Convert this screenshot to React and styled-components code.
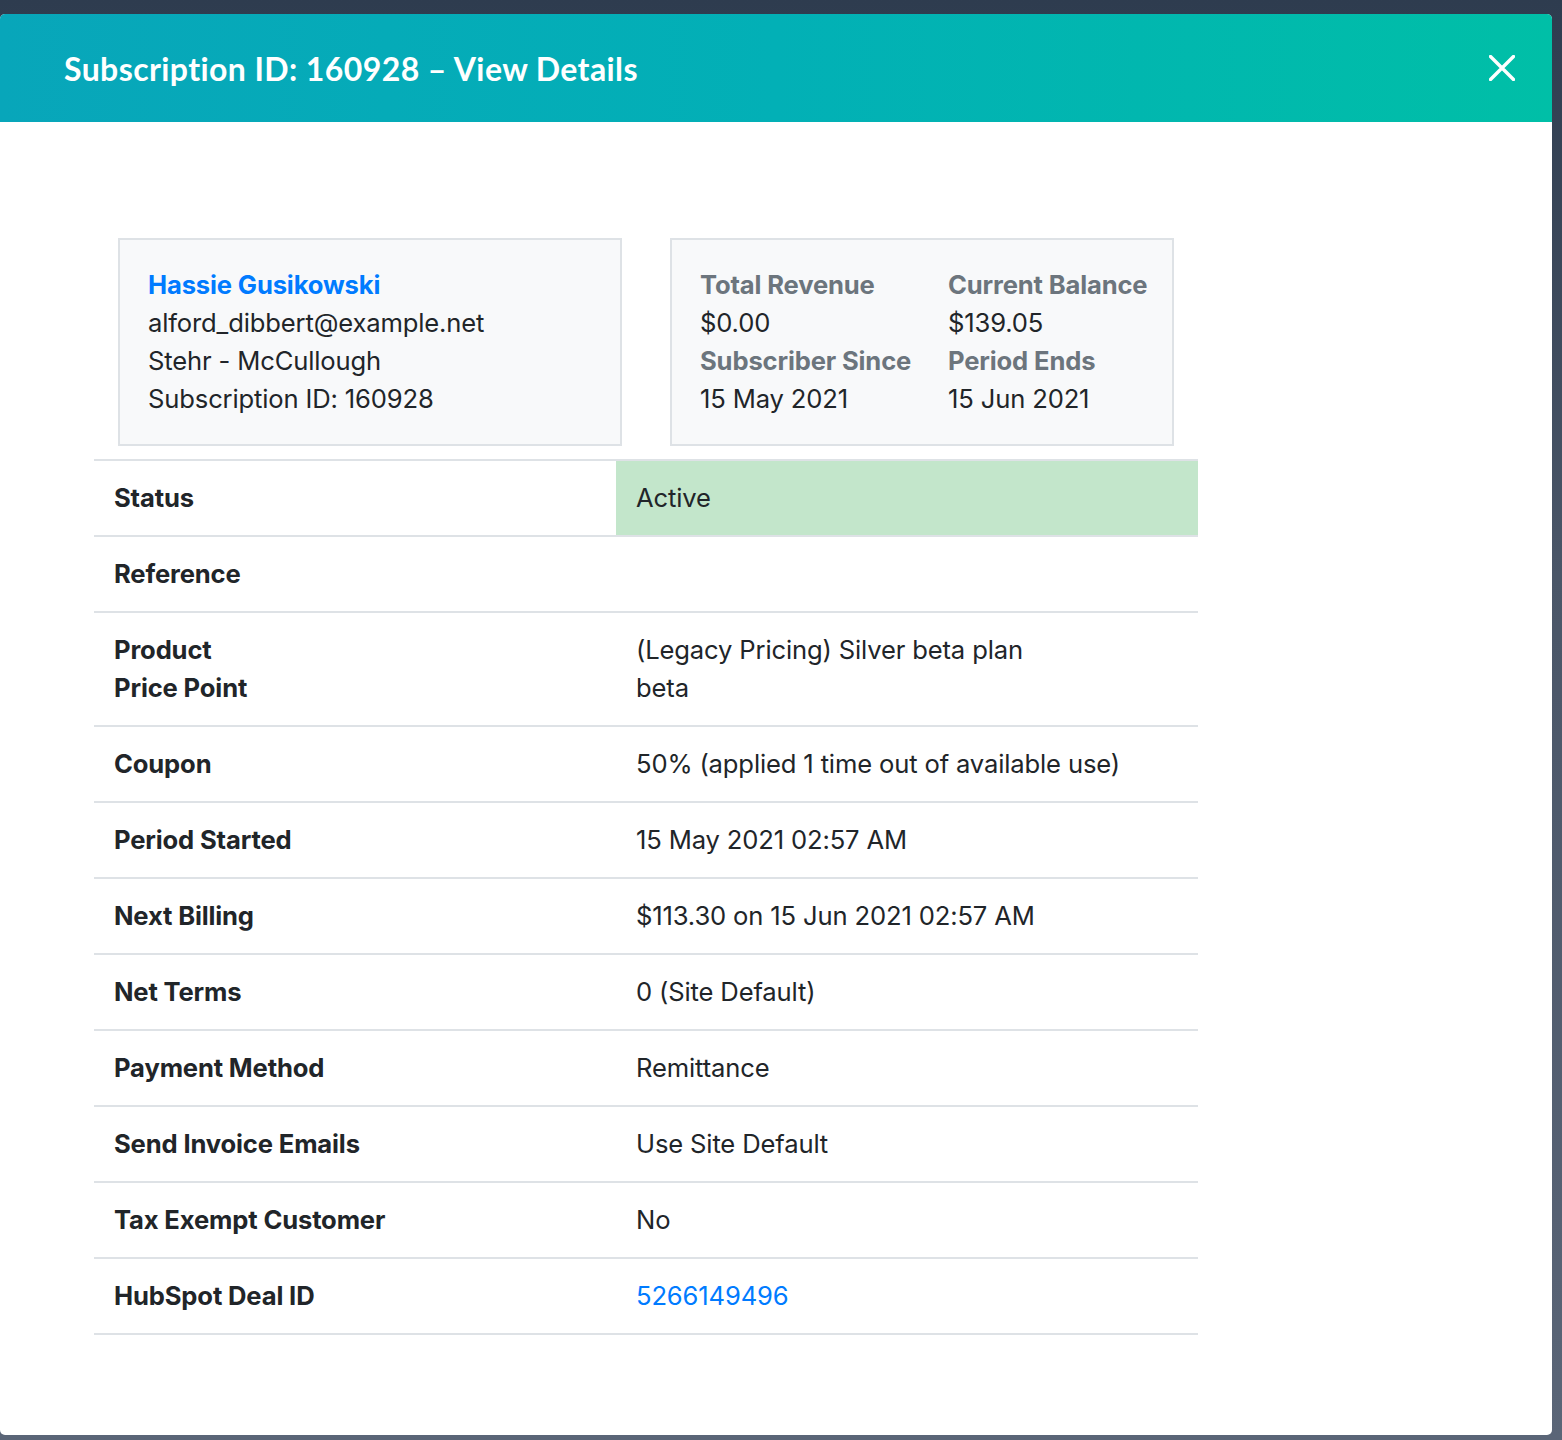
import styled, { createGlobalStyle } from "styled-components";

const GlobalStyle = createGlobalStyle`
  html, body {
    margin: 0;
    padding: 0;
  }
  body {
    background: linear-gradient(180deg, #2e3c4f 0%, #4a5668 40%, #5a6577 100%);
    min-height: 1440px;
    font-family: Inter, "Noto Sans", "Liberation Sans", sans-serif;
    color: #212529;
  }
`;

const rows = [
  { label: "Status", value: "Active", variant: "success" },
  { label: "Reference", value: "" },
  {
    label: ["Product", "Price Point"],
    value: ["(Legacy Pricing) Silver beta plan", "beta"],
  },
  { label: "Coupon", value: "50% (applied 1 time out of available use)" },
  { label: "Period Started", value: "15 May 2021 02:57 AM" },
  { label: "Next Billing", value: "$113.30 on 15 Jun 2021 02:57 AM" },
  { label: "Net Terms", value: "0 (Site Default)" },
  { label: "Payment Method", value: "Remittance" },
  { label: "Send Invoice Emails", value: "Use Site Default" },
  { label: "Tax Exempt Customer", value: "No" },
  { label: "HubSpot Deal ID", value: "5266149496", link: true },
];

const stats = [
  ["Total Revenue", "$0.00"],
  ["Current Balance", "$139.05"],
  ["Subscriber Since", "15 May 2021"],
  ["Period Ends", "15 Jun 2021"],
];

const CloseIcon = () => (
  <svg width="26" height="26" viewBox="0 0 26 26" fill="none">
    <path
      d="M1.5 1.5L24.5 24.5M24.5 1.5L1.5 24.5"
      stroke="#fff"
      strokeWidth="3.4"
      strokeLinecap="round"
    />
  </svg>
);

const lines = (v) => (Array.isArray(v) ? v.map((t) => <div key={t}>{t}</div>) : v);

const App = () => {
  return (
    <Page>
      <GlobalStyle />
      <Modal>
        <Header>
          <Title>Subscription ID: 160928 – View Details</Title>
          <CloseButton aria-label="Close">
            <CloseIcon />
          </CloseButton>
        </Header>
        <Body>
          <Cards>
            <Card>
              <CustomerName href="#">Hassie Gusikowski</CustomerName>
              <div>alford_dibbert@example.net</div>
              <div>Stehr - McCullough</div>
              <div>Subscription ID: 160928</div>
            </Card>
            <Card>
              {[0, 2].map((i) => (
                <StatPair key={i}>
                  <StatLabel>{stats[i][0]}</StatLabel>
                  <StatLabel>{stats[i + 1][0]}</StatLabel>
                  <div>{stats[i][1]}</div>
                  <div>{stats[i + 1][1]}</div>
                </StatPair>
              ))}
            </Card>
          </Cards>
          <Table>
            <tbody>
              {rows.map((r, i) => (
                <tr key={i}>
                  <LabelCell>{lines(r.label)}</LabelCell>
                  <ValueCell $variant={r.variant}>
                    {r.link ? <DealLink href="#">{r.value}</DealLink> : lines(r.value)}
                  </ValueCell>
                </tr>
              ))}
            </tbody>
          </Table>
        </Body>
      </Modal>
    </Page>
  );
};

const Page = styled.div`
  padding: 14px 10px 5px 0;
`;

const Modal = styled.div`
  background: #fff;
  border-radius: 5px;
  overflow: hidden;
  height: 1421px;
`;

const Header = styled.div`
  height: 108px;
  display: flex;
  align-items: center;
  justify-content: space-between;
  padding: 0 37px 0 64px;
  background: linear-gradient(90deg, #08a6ba 0%, #02b0b6 50%, #00bfa7 100%);
`;

const Title = styled.h1`
  margin: 0;
  color: #fff;
  font-family: Lato, "Noto Sans", sans-serif;
  font-weight: 700;
  font-size: 32px;
  letter-spacing: 0.4px;
`;

const CloseButton = styled.button`
  background: none;
  border: none;
  padding: 0;
  display: flex;
  cursor: pointer;
`;

const Body = styled.div`
  padding: 116px 0 0 94px;
  width: 1104px;
  font-size: 25.6px;
  line-height: 38px;
  letter-spacing: -0.15px;
`;

const Cards = styled.div`
  display: flex;
  gap: 48px;
  padding: 0 24px;
  margin-bottom: 13px;
`;

const Card = styled.div`
  flex: 0 0 504px;
  min-width: 0;
  box-sizing: border-box;
  background: #f8f9fa;
  border: 2px solid #dee2e6;
  padding: 26px 28px;
`;

const CustomerName = styled.a`
  display: block;
  color: #007bff;
  font-weight: 700;
  text-decoration: none;
`;

const StatPair = styled.div`
  display: grid;
  grid-template-columns: 248px auto;
  white-space: nowrap;
`;

const StatLabel = styled.div`
  color: #6c757d;
  font-weight: 700;
`;

const Table = styled.table`
  width: 100%;
  border-collapse: collapse;
  border-top: 2px solid #dee2e6;

  & tr {
    border-bottom: 2px solid #dee2e6;
  }
`;

const cell = `
  padding: 18px 20px;
  vertical-align: top;
  text-align: left;
`;

const LabelCell = styled.td`
  ${cell}
  width: 482px;
  font-weight: 700;
`;

const ValueCell = styled.td`
  ${cell}
  background: ${(p) => (p.$variant === "success" ? "#c3e6cb" : "transparent")};
`;

const DealLink = styled.a`
  color: #007bff;
  text-decoration: none;
`;

export default App;
